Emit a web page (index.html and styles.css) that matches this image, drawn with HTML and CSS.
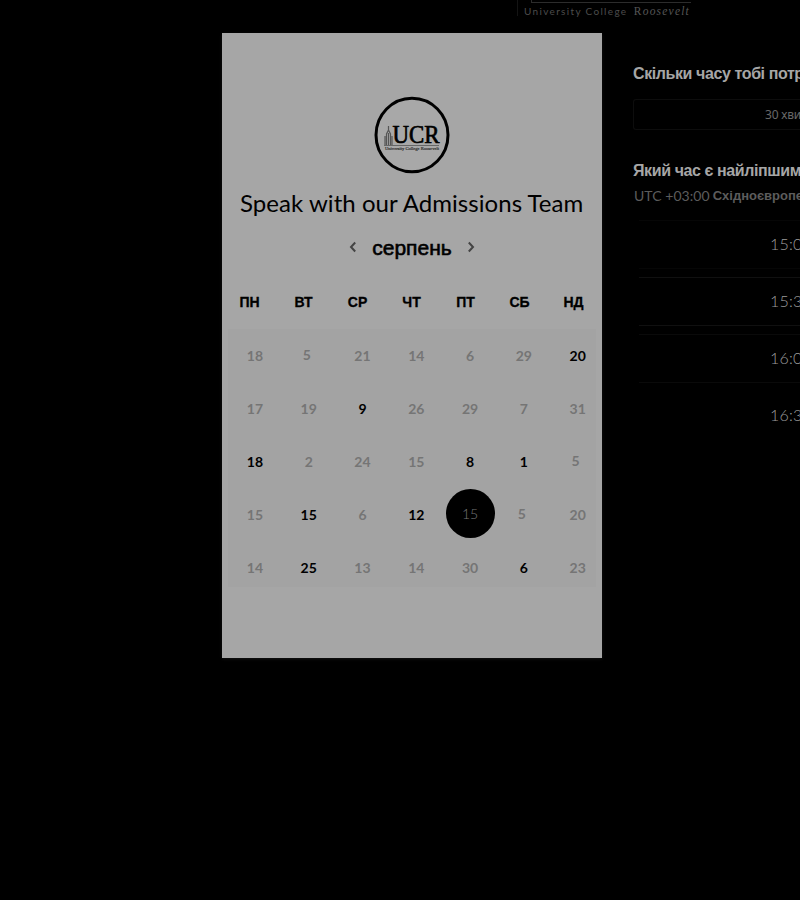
FILE: index.html
```html
<!DOCTYPE html>
<html lang="uk">
<head>
<meta charset="utf-8">
<title>Speak with our Admissions Team</title>
<link rel="stylesheet" href="styles.css">
</head>
<body>
<header class="top">
  <div class="brand"><div class="brand-line"></div><div class="brand-name"><span class="brand-uc">University College</span> <span class="brand-r">R<i>oosevelt</i></span></div></div>
</header>
<main class="page">
  <section class="card">
    <svg class="logo" viewBox="0 0 76 78" width="76" height="78">
      <ellipse cx="38" cy="39" rx="36" ry="36.8" fill="#a8a8a8" stroke="#000" stroke-width="3"/>
      <path d="M14.500 30v5M12.500 49v-11l2-4 2 4v11M11 40v9M18 40v9M14.500 37v12" fill="none" stroke="#555" stroke-width="1.200"/>
      <path d="M10 49.500h55" stroke="#555" stroke-width=".8"/>
      <text class="logo-main" x="18.500" y="46.500" textLength="47" lengthAdjust="spacingAndGlyphs">UCR</text>
      <text class="logo-sub" x="11" y="54" textLength="54" lengthAdjust="spacingAndGlyphs">University College Roosevelt</text>
    </svg>
    <h1 class="title">Speak with our Admissions Team</h1>
    <div class="month">
      <svg width="8" height="12" viewBox="0 0 8 12"><path d="M6.200 1.500 2 6l4.200 4.500"/></svg>
      <h2 class="month-name">серпень</h2>
      <svg width="8" height="12" viewBox="0 0 8 12"><path d="M1.800 1.500 6 6l-4.200 4.500"/></svg>
    </div>
    <div class="weekdays"><span>ПН</span><span>ВТ</span><span>СР</span><span>ЧТ</span><span>ПТ</span><span>СБ</span><span>НД</span></div>
    <div class="dates">
      <div class="week"><span>18</span><span class="shift">5</span><span>21</span><span>14</span><span>6</span><span>29</span><span class="on">20</span></div>
      <div class="week"><span>17</span><span>19</span><span class="on">9</span><span>26</span><span>29</span><span>7</span><span>31</span></div>
      <div class="week"><span class="on">18</span><span>2</span><span>24</span><span>15</span><span class="on">8</span><span class="on">1</span><span class="shift">5</span></div>
      <div class="week"><span>15</span><span class="on">15</span><span>6</span><span class="on">12</span><span><b class="picked">15</b></span><span class="shift">5</span><span>20</span></div>
      <div class="week"><span>14</span><span class="on">25</span><span>13</span><span>14</span><span>30</span><span class="on">6</span><span>23</span></div>
    </div>
  </section>
  <aside class="side">
    <h3 class="ask">Скільки часу тобі потр</h3>
    <div class="duration">30 хви</div>
    <h3 class="ask">Який час є найліпшим</h3>
    <p class="zone"><span class="utc">UTC +03:00</span> <b>Східноєвропе</b></p>
    <div class="slots"><div class="slot faint">15:0</div><div class="slot">15:3</div><div class="slot dim">16:0</div><div class="slot bare">16:3</div></div>
  </aside>
</main>
</body>
</html>
```
FILE: styles.css
```css
* { box-sizing: border-box; }
body { margin: 0; width: 800px; height: 900px; overflow: hidden; background: #000; font-family: "Liberation Sans", sans-serif; }
h1, h2, h3, p { margin: 0; white-space: nowrap; }
.top { height: 33px; padding-left: 517px; }
.brand { width: 175px; height: 16px; border-left: 1px solid #141414; }
.brand-line { height: 3px; margin: 0 1px 0 13px; border-bottom: 1px solid #2c2c2c; border-left: 1px solid #2c2c2c; }
.brand-name { display: flex; justify-content: space-between; align-items: baseline; width: 166px; margin: 1px 0 0 6px; line-height: 14px; white-space: nowrap; color: #4c4c4c; }
.brand-uc { font: 10px/14px Lato, sans-serif; letter-spacing: 1.33px; }
.brand-r { font: 11.500px/14px "Liberation Serif", serif; letter-spacing: 1.2px; color: #565656; }
.page { display: flex; align-items: flex-start; padding-left: 222px; }
.card { display: flex; flex: none; flex-direction: column; width: 380px; height: 625px; padding-top: 63px; background: #a6a6a6; overflow: hidden; box-shadow: 0 1px 3px #141414; }
.logo { align-self: center; flex: none; }
.logo-main { font: 25px "Liberation Serif", serif; stroke: #000; stroke-width: .7px; }
.logo-sub { font: 5px "Liberation Serif", serif; fill: #333; stroke: #333; stroke-width: .2px; }
.title { margin-top: 11px; padding-left: 18px; font: 400 24px/36px Lato, sans-serif; letter-spacing: .05px; color: #000; }
.month { display: flex; justify-content: center; align-items: center; gap: 15px; height: 30px; margin-top: 12px; }
.month svg { fill: none; stroke: #444; stroke-width: 2; margin-bottom: 2px; }
.month-name { font-size: 21px; line-height: 28px; font-weight: 400; -webkit-text-stroke: .6px #000; }
.weekdays { display: grid; grid-template-columns: repeat(7, 54px); height: 20px; margin: 29px 0 0 .5px; font-size: 14px; line-height: 20px; font-weight: 700; text-align: center; -webkit-text-stroke: .3px #000; }
.dates { width: 368px; height: 258px; margin: 17px 0 0 6px; background: #a3a3a3; }
.week { display: grid; grid-template-columns: repeat(7, 53.800px); height: 53px; font: 700 14px/53px Lato, sans-serif; text-align: center; color: #757575; }
.week .on { color: #000; }
.week .shift { padding-right: 4px; line-height: 52px; }
.picked { display: block; width: 49px; height: 49px; margin: 1px auto 0; border-radius: 50%; background: #000; color: #777; font: 300 14px/49px Lato, sans-serif; }
.side { width: 167px; flex: none; margin-left: 31px; padding-top: 31px; color: #a6a6a6; overflow: hidden; }
.ask { font-size: 16px; line-height: 20px; letter-spacing: -.4px; }
.duration { height: 31px; margin: 15px 0 31px; padding-left: 131px; border: 1px solid #0d0d0d; border-right: 0; border-radius: 3px 0 0 3px; font: 12px/29px "Noto Sans", sans-serif; letter-spacing: -.2px; white-space: nowrap; color: #686868; }
.zone { display: flex; gap: 3px; margin: 5px 0 14px 1px; height: 20px; line-height: 20px; font-size: 13px; color: #5c5c5c; align-items: center; }
.utc { font: 14px/20px Lato, sans-serif; letter-spacing: .05px; }
.slots { display: flex; flex-direction: column; gap: 8px; margin-left: 6px; }
.slot { height: 49px; padding-left: 131px; border: solid #101010; border-width: 1px 0; font: 300 16px/45px Lato, sans-serif; letter-spacing: .2px; color: #9c9c9c; }
.slot.faint { border-color: #060606; }
.slot.dim { border-color: #0a0a0a; }
.slot.bare { border-color: transparent; }
```
